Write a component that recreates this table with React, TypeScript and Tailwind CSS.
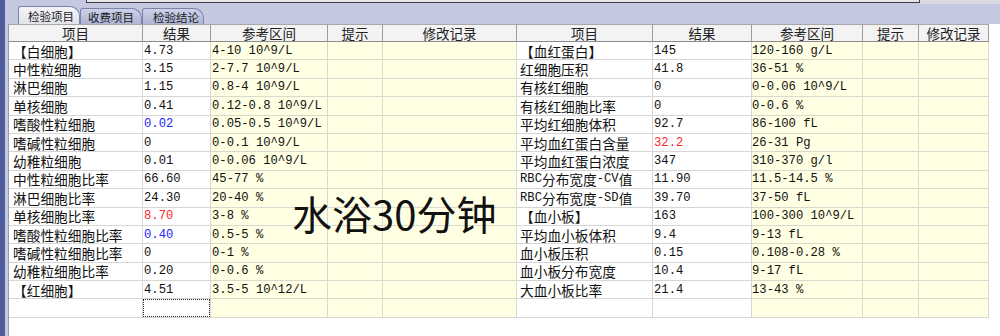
import React from "react";

type Row = {
  name: string;
  result: string;
  tone?: "red" | "blue";
  range: string;
  name2: string;
  result2: string;
  tone2?: "red" | "blue";
  range2: string;
};

const rows: Row[] = [
  { name: "【白细胞】", result: "4.73", range: "4-10 10^9/L", name2: "【血红蛋白】", result2: "145", range2: "120-160 g/L" },
  { name: "中性粒细胞", result: "3.15", range: "2-7.7 10^9/L", name2: "红细胞压积", result2: "41.8", range2: "36-51 %" },
  { name: "淋巴细胞", result: "1.15", range: "0.8-4 10^9/L", name2: "有核红细胞", result2: "0", range2: "0-0.06 10^9/L" },
  { name: "单核细胞", result: "0.41", range: "0.12-0.8 10^9/L", name2: "有核红细胞比率", result2: "0", range2: "0-0.6 %" },
  { name: "嗜酸性粒细胞", result: "0.02", tone: "blue", range: "0.05-0.5 10^9/L", name2: "平均红细胞体积", result2: "92.7", range2: "86-100 fL" },
  { name: "嗜碱性粒细胞", result: "0", range: "0-0.1 10^9/L", name2: "平均血红蛋白含量", result2: "32.2", tone2: "red", range2: "26-31 Pg" },
  { name: "幼稚粒细胞", result: "0.01", range: "0-0.06 10^9/L", name2: "平均血红蛋白浓度", result2: "347", range2: "310-370 g/l" },
  { name: "中性粒细胞比率", result: "66.60", range: "45-77 %", name2: "RBC分布宽度-CV值", result2: "11.90", range2: "11.5-14.5 %" },
  { name: "淋巴细胞比率", result: "24.30", range: "20-40 %", name2: "RBC分布宽度-SD值", result2: "39.70", range2: "37-50 fL" },
  { name: "单核细胞比率", result: "8.70", tone: "red", range: "3-8 %", name2: "【血小板】", result2: "163", range2: "100-300 10^9/L" },
  { name: "嗜酸性粒细胞比率", result: "0.40", tone: "blue", range: "0.5-5 %", name2: "平均血小板体积", result2: "9.4", range2: "9-13 fL" },
  { name: "嗜碱性粒细胞比率", result: "0", range: "0-1 %", name2: "血小板压积", result2: "0.15", range2: "0.108-0.28 %" },
  { name: "幼稚粒细胞比率", result: "0.20", range: "0-0.6 %", name2: "血小板分布宽度", result2: "10.4", range2: "9-17 fL" },
  { name: "【红细胞】", result: "4.51", range: "3.5-5 10^12/L", name2: "大血小板比率", result2: "21.4", range2: "13-43 %" },
];

const headers = ["项目", "结果", "参考区间", "提示", "修改记录", "项目", "结果", "参考区间", "提示", "修改记录"];

const toneClass = (tone?: "red" | "blue") =>
  tone === "red" ? "text-[#ff2626]" : tone === "blue" ? "text-[#2424ff]" : "text-[#111]";

// ascii runs in the mono face, chinese runs a touch larger
function Mixed({ text }: { text: string }) {
  const parts = text.match(/[\x00-\x7f]+|[^\x00-\x7f]+/g) ?? [];
  return (
    <>
      {parts.map((p, i) =>
        /^[\x00-\x7f]/.test(p) ? (
          <span key={i} className="font-['Liberation_Mono',monospace] text-[12.2px]">{p}</span>
        ) : (
          <span key={i} className="font-['Noto_Sans_CJK_SC',sans-serif] text-[13.7px]">{p}</span>
        )
      )}
    </>
  );
}

function Cell({ children, yellow, className = "" }: { children?: React.ReactNode; yellow?: boolean; className?: string }) {
  return (
    <div
      className={`flex items-center whitespace-nowrap border-r border-b leading-[16px] ${
        yellow ? "bg-[#ffffe3] border-[#d9d9cf]" : "bg-white border-[#d6d6d6]"
      } ${className}`}
    >
      {children}
    </div>
  );
}

function Num({ value, tone }: { value: string; tone?: "red" | "blue" }) {
  return <span className={`font-['Liberation_Mono',monospace] text-[12.2px] ${toneClass(tone)}`}>{value}</span>;
}

export default function App() {
  return (
    <div className="w-[1000px] h-[336px] flex bg-[#c4c9e0] overflow-hidden">
      <div className="w-[5px] bg-[#4f5c9c]" />
      <div className="flex-1 flex flex-col">
        <div className="h-[5px] flex">
          <div className="w-[81px]" />
          <div className="w-[834px] h-[3px] bg-[#e4e4e9] border-x border-b border-[#3c3c44]" />
          <div className="flex-1 h-[4px] bg-[#d9d9e0]" />
        </div>

        <div className="h-[19px] flex items-end pl-[13px] font-['Noto_Sans_CJK_SC',sans-serif] text-[11.5px] leading-[14px] text-[#1a1a1a]">
          <div className="w-[62px] h-[18px] flex items-center pl-[9px] rounded-tl-[3px] rounded-tr-[10px] border border-b-0 border-[#7c84aa] bg-gradient-to-b from-[#f4f4f8] to-[#e2e3ea]">
            检验项目
          </div>
          <div className="w-[62px] h-[16px] flex items-center pl-[7px] rounded-tl-[3px] rounded-tr-[10px] border border-b-0 border-[#7c84aa] bg-gradient-to-b from-[#cdd2ea] to-[#aeb4d3]">
            收费项目
          </div>
          <div className="w-[62px] h-[16px] flex items-center pl-[10px] rounded-tl-[3px] rounded-tr-[10px] border border-b-0 border-[#7c84aa] bg-gradient-to-b from-[#cdd2ea] to-[#aeb4d3]">
            检验结论
          </div>
        </div>

        <div className="flex-1 ml-[3px] bg-white border-l border-[#9a9aa8] relative">
          <div className="grid grid-cols-[134px_68px_117px_55px_134px_136px_99px_111px_56px_70px] grid-rows-[18px_repeat(15,18.4px)] w-fit">
            {headers.map((h, i) => (
              <div
                key={i}
                className="flex items-center justify-center border-t border-t-[#a8a8a8] border-r border-r-[#9c9c9c] border-b border-b-[#8c8c8c] bg-[#f3f3f3] font-['Noto_Sans_CJK_SC',sans-serif] text-[13.5px] leading-[15px] text-[#222]"
              >
                {h}
              </div>
            ))}

            {rows.map((r, i) => (
              <React.Fragment key={i}>
                <Cell className="pl-[4px] text-[#111]">
                  <Mixed text={r.name} />
                </Cell>
                <Cell className="pl-[1px]">
                  <Num value={r.result} tone={r.tone} />
                </Cell>
                <Cell yellow className="pl-[1px]">
                  <Num value={r.range} />
                </Cell>
                <Cell yellow />
                <Cell yellow />
                <Cell className="pl-[3px] text-[#111]">
                  <Mixed text={r.name2} />
                </Cell>
                <Cell className="pl-[1px]">
                  <Num value={r.result2} tone={r.tone2} />
                </Cell>
                <Cell yellow>
                  <Num value={r.range2} />
                </Cell>
                <Cell yellow />
                <Cell yellow />
              </React.Fragment>
            ))}

            <Cell />
            <Cell className="p-0">
              <div className="w-full h-full border border-dotted border-[#222]" />
            </Cell>
            <Cell yellow />
            <Cell yellow />
            <Cell yellow />
            <Cell />
            <Cell />
            <Cell yellow />
            <Cell yellow />
            <Cell yellow />
          </div>

          <div className="absolute left-[283px] top-[165px] font-['Noto_Sans_CJK_SC',sans-serif] text-[40px] leading-[48px] text-[#111]">
            水浴30分钟
          </div>
        </div>
      </div>
    </div>
  );
}
